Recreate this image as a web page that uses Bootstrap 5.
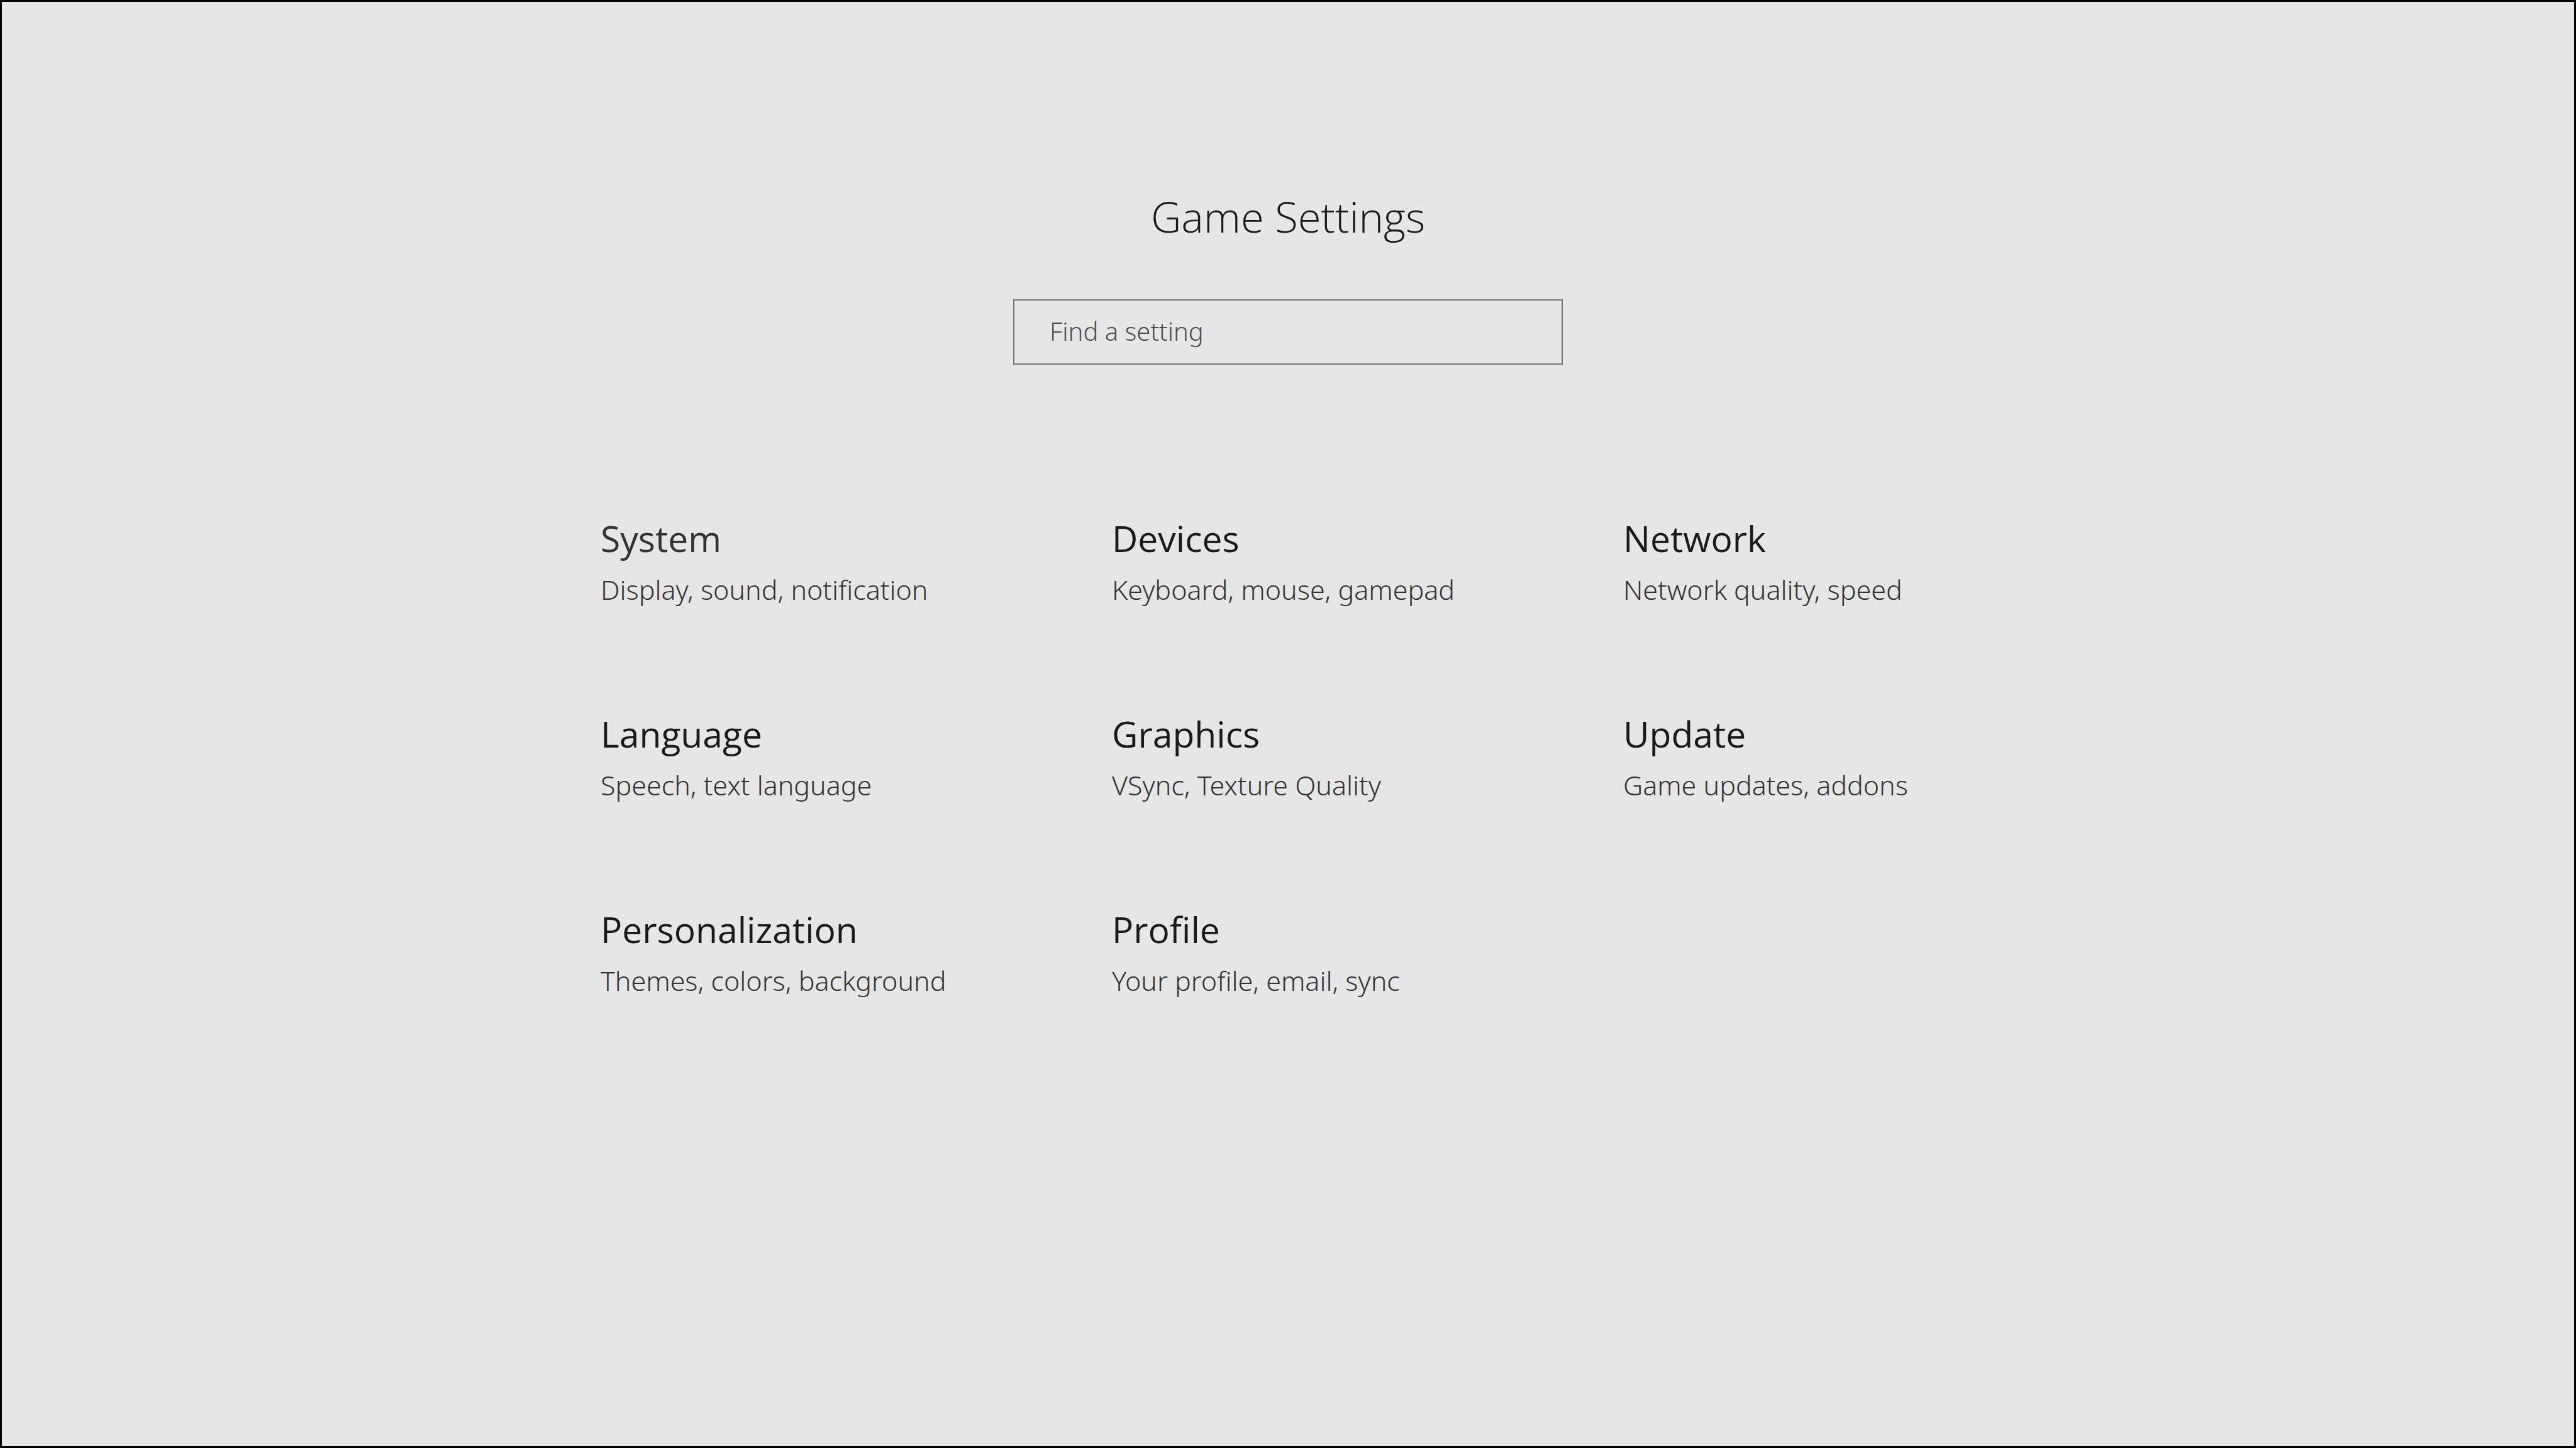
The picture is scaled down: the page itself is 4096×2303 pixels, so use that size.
<!DOCTYPE html>
<html lang="en">
<head>
<meta charset="utf-8">
<meta name="viewport" content="width=device-width, initial-scale=1">
<title>Game Settings</title>
<link href="https://cdn.jsdelivr.net/npm/bootstrap@5.3.0/dist/css/bootstrap.min.css" rel="stylesheet">
<style>
  body {
    font-family: "Open Sans", "Noto Sans", sans-serif;
    background: #e6e6e6;
    color: #1a1a1a;
    border: 3px solid #000;
  }
  .settings-page { padding-top: 297px; padding-bottom: 160px; }
  .page-title { font-size: 67px; line-height: 88px; font-weight: 300; margin-bottom: 88px; }
  .search-form { max-width: 874px; margin-bottom: 240px; }
  .search-field, .search-field:focus {
    height: 104px;
    padding: 0 56px 4px;
    font-family: "Noto Sans", sans-serif;
    font-size: 40px;
    font-weight: 350;
    color: #1a1a1a;
    background: transparent;
    border: 2px solid #767676;
  }
  .search-field::placeholder { color: #4c4c4c; opacity: 1; }
  .settings-grid { max-width: 2186px; }
  .settings-grid > .row { --bs-gutter-x: 253px; --bs-gutter-y: 163px; }
  .tile { color: #1a1a1a; }
  .tile:hover, .tile.active { color: #333; }
  .tile-name { font-size: 57px; line-height: 72px; font-weight: 400; margin-bottom: 16px; }
  .tile-info { font-family: "Noto Sans", sans-serif; font-size: 43px; line-height: 60px; font-weight: 350; color: #333; }
</style>
</head>
<body class="min-vh-100">
<main class="settings-page d-flex flex-column align-items-center">
  <h1 class="page-title text-center">Game Settings</h1>
  <form class="search-form w-100" role="search">
    <input type="search" class="search-field form-control rounded-0 shadow-none" placeholder="Find a setting" aria-label="Find a setting">
  </form>
  <nav class="settings-grid w-100" aria-label="Settings">
    <div class="row row-cols-1 row-cols-lg-3">
      <div class="col"><a href="#system" class="tile active d-block text-decoration-none"><h2 class="tile-name">System</h2><p class="tile-info mb-0">Display, sound, notification</p></a></div>
      <div class="col"><a href="#devices" class="tile d-block text-decoration-none"><h2 class="tile-name">Devices</h2><p class="tile-info mb-0">Keyboard, mouse, gamepad</p></a></div>
      <div class="col"><a href="#network" class="tile d-block text-decoration-none"><h2 class="tile-name">Network</h2><p class="tile-info mb-0">Network quality, speed</p></a></div>
      <div class="col"><a href="#language" class="tile d-block text-decoration-none"><h2 class="tile-name">Language</h2><p class="tile-info mb-0">Speech, text language</p></a></div>
      <div class="col"><a href="#graphics" class="tile d-block text-decoration-none"><h2 class="tile-name">Graphics</h2><p class="tile-info mb-0">VSync, Texture Quality</p></a></div>
      <div class="col"><a href="#update" class="tile d-block text-decoration-none"><h2 class="tile-name">Update</h2><p class="tile-info mb-0">Game updates, addons</p></a></div>
      <div class="col"><a href="#personalization" class="tile d-block text-decoration-none"><h2 class="tile-name">Personalization</h2><p class="tile-info mb-0">Themes, colors, background</p></a></div>
      <div class="col"><a href="#profile" class="tile d-block text-decoration-none"><h2 class="tile-name">Profile</h2><p class="tile-info mb-0">Your profile, email, sync</p></a></div>
    </div>
  </nav>
</main>
<script src="https://cdn.jsdelivr.net/npm/bootstrap@5.3.0/dist/js/bootstrap.bundle.min.js"></script>
</body>
</html>
